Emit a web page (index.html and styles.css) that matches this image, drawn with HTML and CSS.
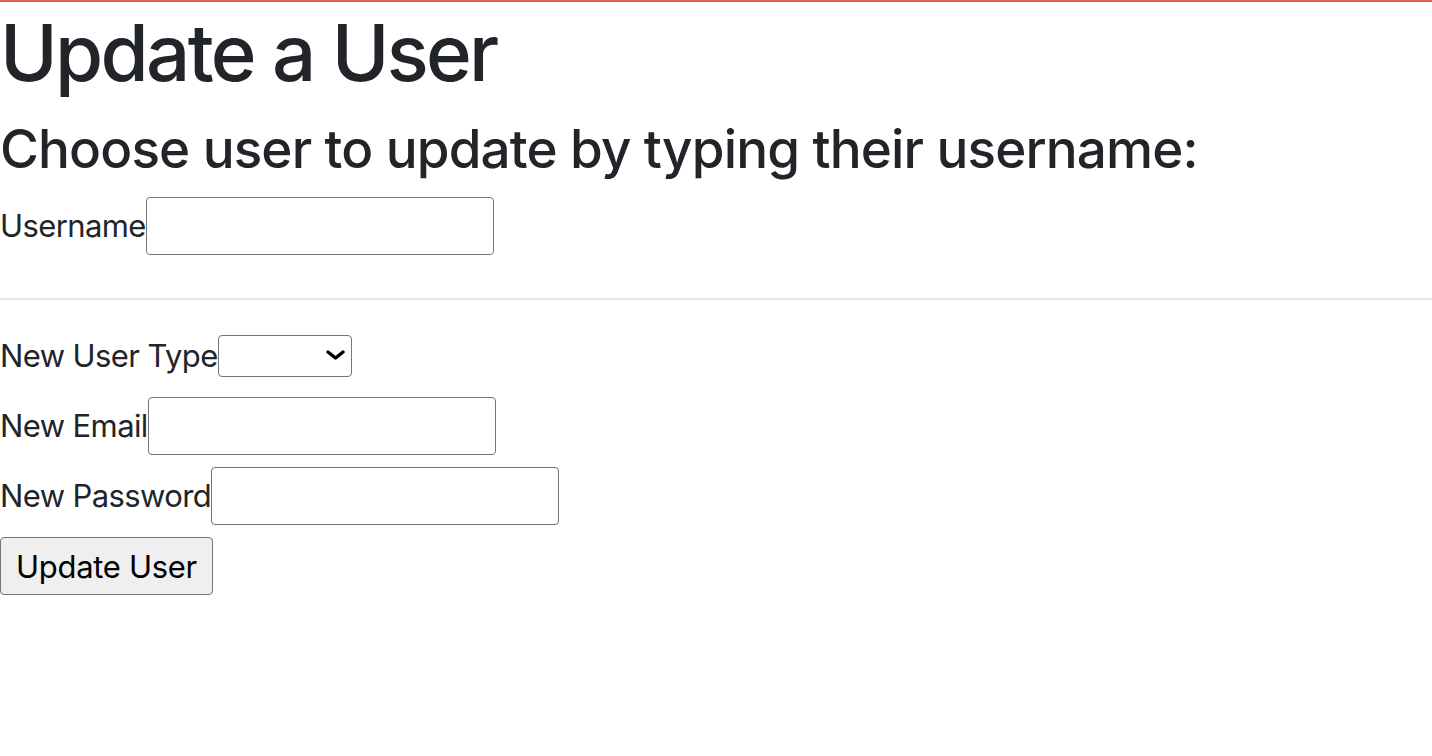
FILE: index.html
```html
<!DOCTYPE html>
<html lang="en">
<head>
<meta charset="utf-8">
<title>Update a User</title>
<link rel="stylesheet" href="styles.css">
</head>
<body>
<main class="page">
  <h1 class="title">Update a User</h1>
  <h2 class="subtitle">Choose user to update by typing their username:</h2>
  <form class="form">
    <div class="row"><label class="label" for="username">Username</label><input class="field" id="username" type="text"></div>
    <hr class="divider">
    <div class="row row-select"><label class="label" for="type">New User Type</label><span class="select-wrap"><select class="select" id="type"><option></option></select><svg class="chev" viewBox="0 0 19 10" width="19" height="10"><path d="M2 2 L9.5 8 L17 2" fill="none" stroke="#000" stroke-width="3.4" stroke-linecap="round" stroke-linejoin="round"/></svg></span></div>
    <div class="row"><label class="label" for="email">New Email</label><input class="field" id="email" type="text"></div>
    <div class="row"><label class="label" for="pw">New Password</label><input class="field" id="pw" type="password"></div>
    <div class="row"><button class="btn" type="button">Update User</button></div>
  </form>
</main>
</body>
</html>
```

FILE: styles.css
```css
html, body {
  margin: 0;
  padding: 0;
  background: #fff;
}
body {
  border-top: 2px solid #dc5f56;
  font-family: Inter, "Noto Sans", sans-serif;
  color: #212529;
  font-size: 32px;
  line-height: 1.5;
}
.title {
  font-size: 78px;
  font-weight: 500;
  line-height: 96px;
  margin: 3px 0 16px;
  letter-spacing: -2.7px;
}
.subtitle {
  font-size: 53px;
  font-weight: 500;
  line-height: 64px;
  margin: 0 0 16px;
  letter-spacing: -0.85px;
}
.form {
  display: flex;
  flex-direction: column;
}
.row {
  display: flex;
  align-items: center;
  margin-bottom: 12px;
}
.label {
  font-size: 31px;
  line-height: 42px;
  letter-spacing: -0.6px;
}
.field {
  box-sizing: border-box;
  width: 348px;
  height: 58px;
  border: 1px solid #767676;
  border-radius: 4px;
  background: #fff;
  margin: 0;
  padding: 0 4px;
  font: inherit;
}
.divider {
  border: 0;
  border-top: 2px solid #e5e5e5;
  margin: 31px 0 35px;
  width: 100%;
}
.row-select {
  margin-bottom: 20px;
}
.select-wrap {
  position: relative;
  display: inline-block;
}
.select {
  appearance: none;
  -webkit-appearance: none;
  box-sizing: border-box;
  width: 134px;
  height: 42px;
  border: 1px solid #767676;
  border-radius: 4px;
  background: #fff;
  margin: 0;
  display: block;
}
.chev {
  position: absolute;
  right: 7px;
  top: 15px;
  pointer-events: none;
}
.btn {
  box-sizing: border-box;
  width: 213px;
  height: 58px;
  border: 1px solid #767676;
  border-radius: 4px;
  background: #efefef;
  color: #000;
  font-family: Inter, "Noto Sans", sans-serif;
  font-size: 31px;
  letter-spacing: -0.3px;
  padding: 0;
  margin: 0;
}
```
